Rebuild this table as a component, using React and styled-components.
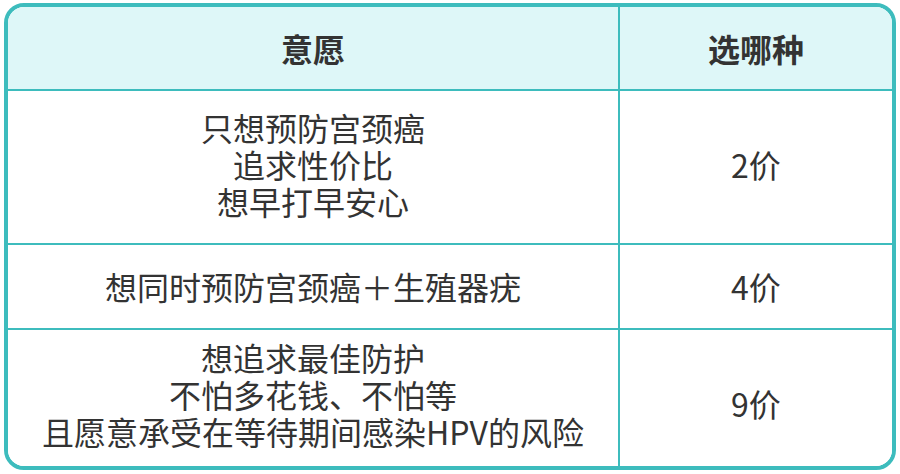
import React from "react";
import styled, { createGlobalStyle } from "styled-components";

const GlobalStyle = createGlobalStyle`
  html, body {
    margin: 0;
    padding: 0;
    background: #ffffff;
  }
  body {
    font-family: "Noto Sans CJK SC", "Noto Sans", sans-serif;
    color: #333333;
  }
`;

const Page = styled.div`
  width: 900px;
  height: 474px;
  padding: 3px 4px 0 4px;
  box-sizing: border-box;
`;

const Table = styled.div`
  display: grid;
  grid-template-columns: 612px 1fr;
  grid-template-rows: 84px 154px 85px 136px;
  width: 892px;
  height: 467px;
  box-sizing: border-box;
  border: 4px solid #3dbcbd;
  border-radius: 20px;
  overflow: hidden;
`;

const Cell = styled.div`
  display: flex;
  flex-direction: column;
  align-items: center;
  justify-content: center;
  text-align: center;
  box-sizing: border-box;
  background: ${(p) => (p.$head ? "#def7f8" : "#ffffff")};
  font-size: 32px;
  font-weight: ${(p) => (p.$head ? 700 : 400)};
  line-height: 37px;
  color: #333333;
  border-right: ${(p) => (p.$last ? "none" : "2px solid #3dbcbd")};
  border-bottom: ${(p) => (p.$bottom ? "none" : "2px solid #3dbcbd")};
  padding-bottom: ${(p) => p.$lift || 0}px;
  padding-top: ${(p) => p.$drop || 0}px;
`;

const Line = styled.span`
  display: block;
  white-space: nowrap;
`;

const rows = [
  { wish: ["只想预防宫颈癌", "追求性价比", "想早打早安心"], pick: "2价", lift: 6, drop: 0 },
  { wish: ["想同时预防宫颈癌＋生殖器疣"], pick: "4价", lift: 0, drop: 0 },
  {
    wish: ["想追求最佳防护", "不怕多花钱、不怕等", "且愿意承受在等待期间感染HPV的风险"],
    pick: "9价",
    lift: 8,
    drop: 10,
  },
];

export default function App() {
  return (
    <>
      <GlobalStyle />
      <Page>
        <Table>
          <Cell $head>意愿</Cell>
          <Cell $head $last>选哪种</Cell>
          {rows.map((row, i) => {
            const bottom = i === rows.length - 1;
            return (
              <React.Fragment key={row.pick}>
                <Cell $bottom={bottom} $lift={row.lift}>
                  {row.wish.map((t) => (
                    <Line key={t}>{t}</Line>
                  ))}
                </Cell>
                <Cell $bottom={bottom} $last $lift={i === 0 ? row.lift : 0} $drop={row.drop}>
                  {row.pick}
                </Cell>
              </React.Fragment>
            );
          })}
        </Table>
      </Page>
    </>
  );
}
